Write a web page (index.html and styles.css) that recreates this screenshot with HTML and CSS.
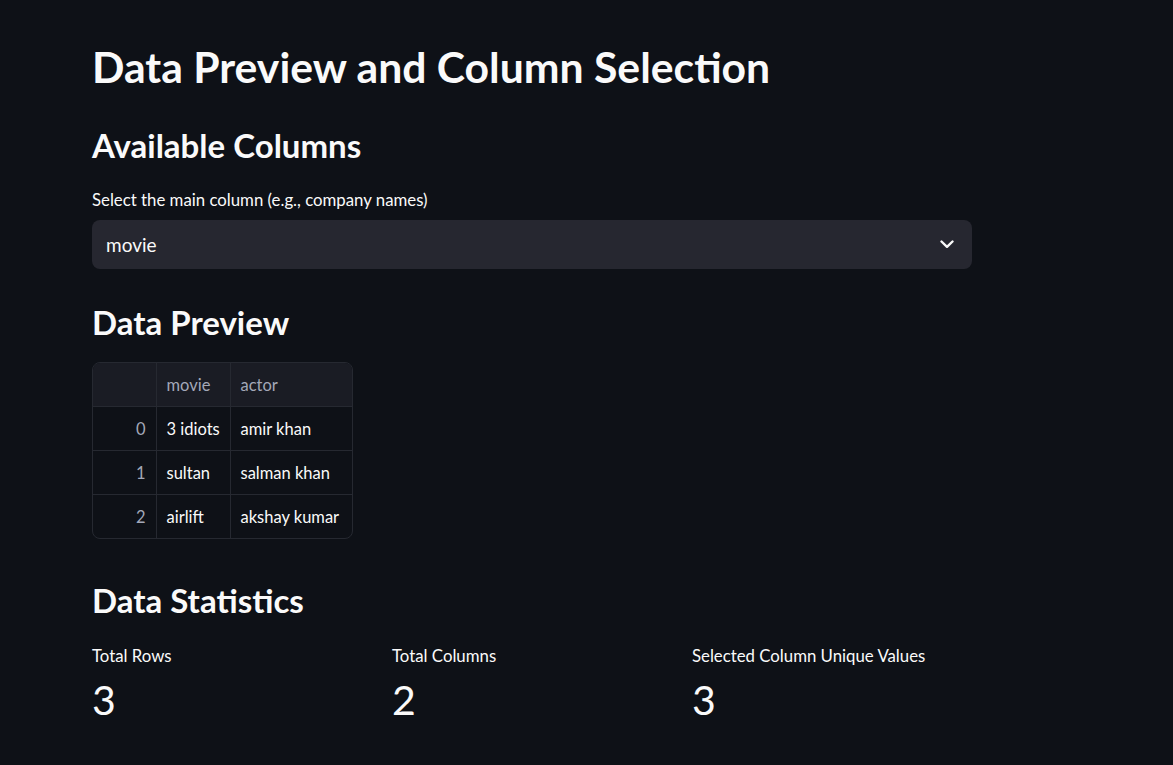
FILE: index.html
```html
<!DOCTYPE html>
<html>
<head>
<meta charset="utf-8">
<link rel="stylesheet" href="styles.css">
</head>
<body>
<main class="main">
  <h1 class="title">Data Preview and Column Selection</h1>
  <h2 class="heading h-avail">Available Columns</h2>
  <div class="field">
    <label class="field-label">Select the main column (e.g., company names)</label>
    <div class="select">
      <span class="select-value">movie</span>
      <svg class="chevron" width="14" height="9" viewBox="0 0 14 9"><polyline points="1.5,1.5 7,6.8 12.5,1.5" fill="none" stroke="#fafafa" stroke-width="2.4" stroke-linecap="round" stroke-linejoin="round"/></svg>
    </div>
  </div>
  <h2 class="heading h-preview">Data Preview</h2>
  <div class="table-wrap">
    <table class="grid">
      <colgroup><col class="w-idx"><col class="w-movie"><col class="w-actor"></colgroup>
      <thead>
        <tr><th class="idx"></th><th>movie</th><th>actor</th></tr>
      </thead>
      <tbody>
        <tr><td class="idx">0</td><td>3 idiots</td><td>amir khan</td></tr>
        <tr><td class="idx">1</td><td>sultan</td><td>salman khan</td></tr>
        <tr><td class="idx">2</td><td>airlift</td><td>akshay kumar</td></tr>
      </tbody>
    </table>
  </div>
  <h2 class="heading h-stats">Data Statistics</h2>
  <div class="metrics">
    <div class="metric"><div class="metric-label">Total Rows</div><div class="metric-value">3</div></div>
    <div class="metric"><div class="metric-label">Total Columns</div><div class="metric-value">2</div></div>
    <div class="metric"><div class="metric-label">Selected Column Unique Values</div><div class="metric-value">3</div></div>
  </div>
</main>
</body>
</html>
```
FILE: styles.css
```css
html, body {
  margin: 0;
  padding: 0;
  background: #0e1117;
  color: #fafafa;
  font-family: Lato, "Source Sans Pro", "Liberation Sans", sans-serif;
}
.main {
  width: 880px;
  margin-left: 92px;
  padding-top: 40px;
}
.title {
  margin: 0;
  font-size: 42.7px;
  font-weight: 700;
  line-height: 54px;
}
.heading {
  margin: 0;
  font-size: 33px;
  font-weight: 700;
  line-height: 40px;
}
.h-avail { margin-top: 31px; }
.field { margin-top: 23px; }
.field-label {
  display: block;
  font-size: 16.8px;
  line-height: 24px;
}
.select {
  margin-top: 8px;
  height: 49px;
  background: #262730;
  border-radius: 8px;
  display: flex;
  align-items: center;
  justify-content: space-between;
  padding: 0 18px 0 14px;
}
.select-value { font-size: 19px; }
.h-preview { margin-top: 33px; }
.table-wrap {
  margin-top: 20px;
  width: 259px;
  border: 1px solid #262931;
  border-radius: 8px;
  overflow: hidden;
}
.grid {
  border-collapse: collapse;
  table-layout: fixed;
  width: 100%;
  font-size: 16.5px;
}
.w-idx { width: 63px; }
.w-movie { width: 74px; }
.grid th, .grid td {
  height: 43px;
  padding: 0 10px;
  text-align: left;
  border-right: 1px solid #262931;
  border-bottom: 1px solid #262931;
  white-space: nowrap;
}
.grid tr > :last-child { border-right: none; }
.grid tbody tr:last-child td { border-bottom: none; }
.grid th {
  background: #1a1c24;
  color: #a3a8b8;
  font-weight: 400;
}
.grid .idx {
  text-align: right;
  color: #a3a8b8;
}
.h-stats { margin-top: 41px; }
.metrics {
  margin-top: 24px;
  display: grid;
  grid-template-columns: repeat(3, 1fr);
  column-gap: 20px;
}
.metric-label {
  font-size: 16.8px;
  line-height: 24px;
}
.metric-value {
  margin-top: 8px;
  font-size: 41px;
  line-height: 48px;
  font-weight: 400;
}
```
